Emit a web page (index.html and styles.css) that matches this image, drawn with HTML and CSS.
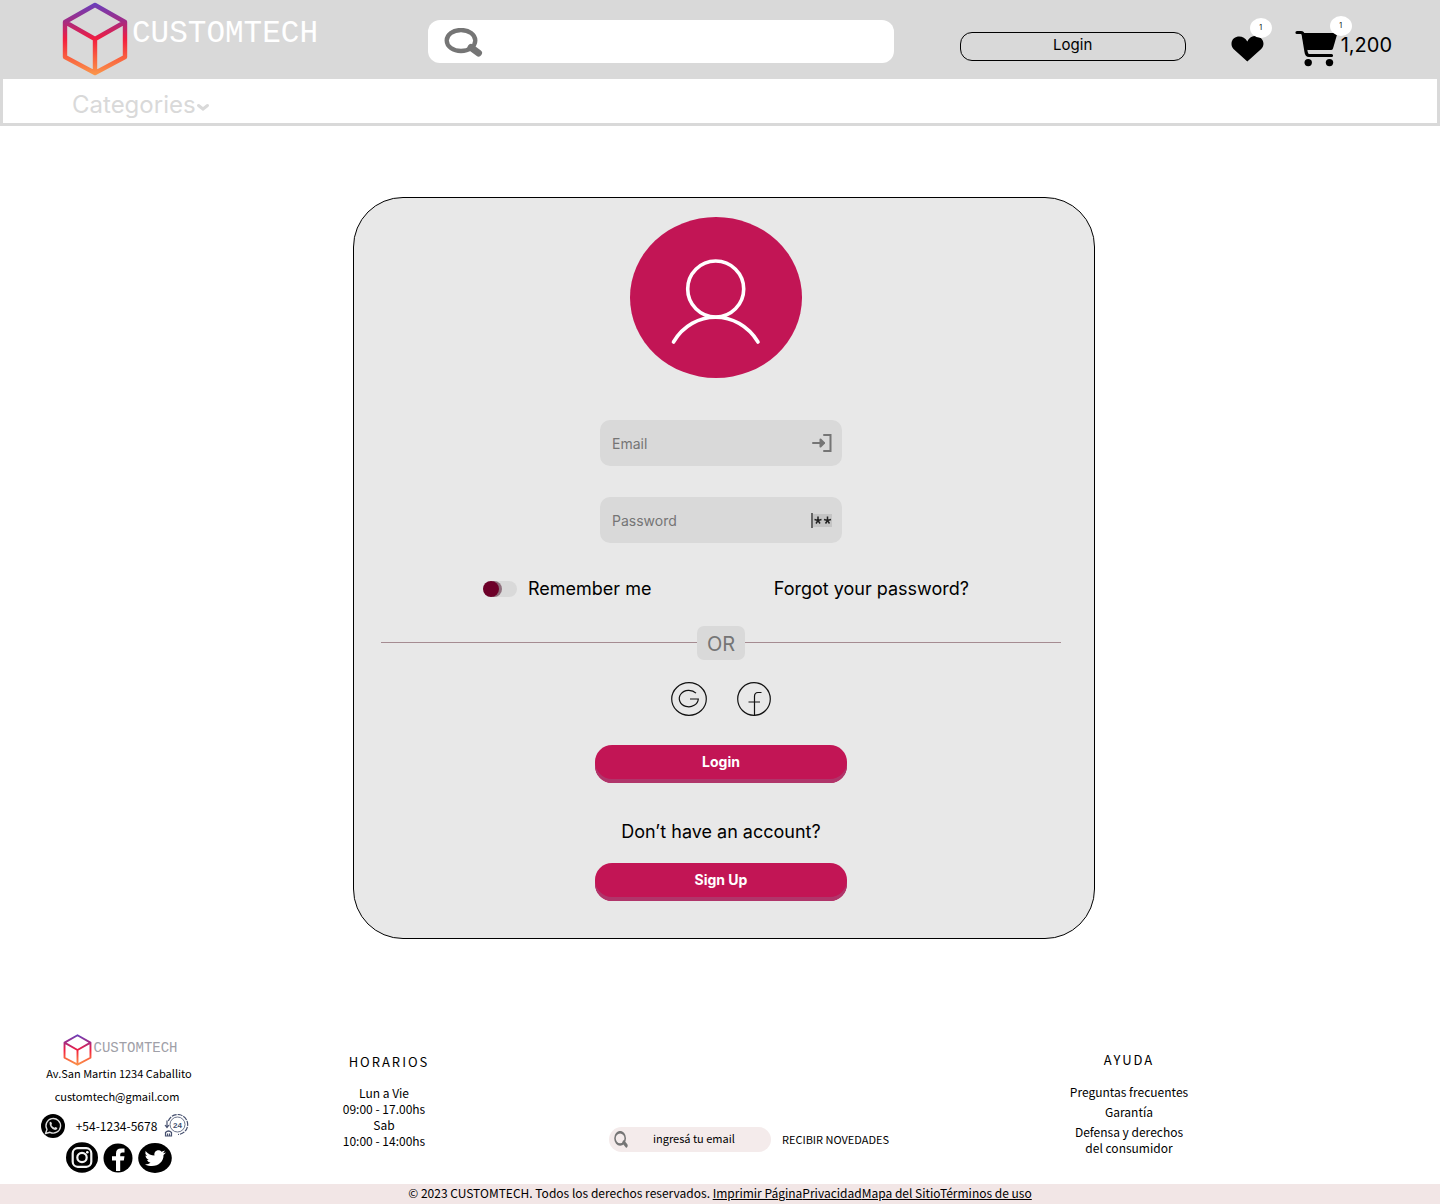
FILE: index.html
```html
<!DOCTYPE html>
<html lang="en">
<head>
<meta charset="utf-8">
<meta name="viewport" content="width=device-width, initial-scale=1">
<title>CUSTOMTECH - Login</title>
<link rel="stylesheet" href="styles.css">
</head>
<body>
<svg class="defs" width="0" height="0" aria-hidden="true">
  <defs>
    <linearGradient id="cube-fill" gradientUnits="userSpaceOnUse" x1="0" y1="0" x2="0" y2="74">
      <stop offset="0" stop-color="#6440c0"/>
      <stop offset="0.25" stop-color="#a12c86"/>
      <stop offset="0.5" stop-color="#f21d40"/>
      <stop offset="0.75" stop-color="#f9603f"/>
      <stop offset="1" stop-color="#fa9a4c"/>
    </linearGradient>
    <symbol id="cube" viewBox="0 0 66 74">
      <path d="M33 3 63 20V55L33 71 3 55V20ZM3 20 33 37 63 20M33 37V71" fill="none" stroke="url(#cube-fill)" stroke-width="4.4" stroke-linejoin="round"/>
    </symbol>
    <symbol id="magnifier" viewBox="0 0 39 29" preserveAspectRatio="none">
      <ellipse cx="17" cy="12.500" rx="14.300" ry="10.500" fill="none" stroke="#757575" stroke-width="4.300"/>
      <path d="M27 19.500 34.500 25" stroke="#757575" stroke-width="7" stroke-linecap="round"/>
    </symbol>
  </defs>
</svg>

<header class="topbar">
  <a class="brand" href="#">
    <svg class="brand-cube" aria-hidden="true"><use href="#cube"/></svg>
    <span class="brand-name">CUSTOMTECH</span>
  </a>
  <form class="search" role="search">
    <svg class="search-icon" aria-hidden="true"><use href="#magnifier"/></svg>
    <input class="search-input" type="search" aria-label="Search">
  </form>
  <div class="actions">
    <button class="account-button" type="button">Login</button>
    <a class="favorites" href="#" aria-label="Favorites">
      <svg width="33" height="26" viewBox="0 0 33 26" aria-hidden="true"><path d="M16.300 25.500 2.500 13C-.5 9.500 0 4.500 3 2.200 7-1 13.500 0 16.300 5.500 19-.5 26-1.500 30 2.200 33 5 33.500 9.500 30.200 13Z"/></svg>
      <span class="badge badge-favorites">1</span>
    </a>
    <a class="cart" href="#">
      <svg width="43" height="37" viewBox="0 0 43 37" aria-label="Cart">
        <path d="M6.500 3H42.500L38 18.500Q37.500 20 36 20H12.500L10 19Z"/>
        <path d="M2 2.500H6Q8 2.500 8.300 5L11 21.500Q11.500 25.500 14 25.500H36.500" fill="none" stroke="#000" stroke-width="3.200" stroke-linecap="round"/>
        <circle cx="13.200" cy="32.600" r="3.700"/><circle cx="34.500" cy="32.600" r="3.700"/>
      </svg>
      <span class="badge badge-cart">1</span>
      <span class="cart-total">1,200</span>
    </a>
  </div>
</header>

<nav class="categories">
  <button class="categories-button" type="button">Categories<svg width="14" height="9" viewBox="0 0 14 9" aria-hidden="true"><path d="M2.500 2.500 7 6 11.500 2.500" fill="none" stroke="#d9d9d9" stroke-width="3" stroke-linecap="round"/></svg></button>
</nav>

<main class="main">
  <form class="card">
    <svg class="avatar" viewBox="0 0 172 161" aria-hidden="true">
      <ellipse cx="86" cy="80.500" rx="86" ry="80.500" fill="#c21555"/>
      <g fill="none" stroke="#fff" stroke-width="3.600" stroke-linecap="round">
        <circle cx="85.700" cy="72" r="28"/>
        <path d="M43.500 125C63 92 108 92 128 125"/>
      </g>
    </svg>

    <label class="field">
      <input class="field-input" type="email" placeholder="Email" aria-label="Email">
      <svg width="20" height="20" viewBox="0 0 20 20" aria-hidden="true" fill="none" stroke="#757575" stroke-width="2" stroke-linecap="round"><path d="M12 2H18.500V18H12M1 10H12"/><path d="M8.500 6.500 12 10 8.500 13.500Z" stroke-linejoin="round"/></svg>
    </label>
    <label class="field">
      <input class="field-input" type="password" placeholder="Password" aria-label="Password">
      <svg width="22" height="16" viewBox="0 0 22 16" aria-hidden="true">
        <path d="M3 2H22V15H3Z" fill="#c4c4c4"/><path d="M2 1V16" stroke="#666" stroke-width="2"/>
        <path d="M8 4.500V8.500M4.500 7.500 8 8.500 11.500 7.500M6 11.500 8 8.500 10 11.500M17.500 4.500V8.500M14 7.500 17.500 8.500 21 7.500M15.500 11.500 17.500 8.500 19.500 11.500" fill="none" stroke="#222" stroke-width="1.500"/>
      </svg>
    </label>

    <div class="options">
      <label class="remember"><input class="toggle" type="checkbox">Remember me</label>
      <a class="forgot" href="#">Forgot your password?</a>
    </div>

    <div class="divider"><span class="divider-label">OR</span></div>

    <div class="providers">
      <button class="provider" type="button" aria-label="Continue with Google">
        <svg width="36" height="34" viewBox="0 0 36 34" fill="none" stroke="#111"><ellipse cx="18" cy="17" rx="17.300" ry="16.300" stroke-width="1.200"/><path d="M25 11.200A9.500 8.200 0 1 0 27.300 17H19" stroke-width="1.200"/></svg>
      </button>
      <button class="provider" type="button" aria-label="Continue with Facebook">
        <svg width="34" height="34" viewBox="0 0 34 34" fill="none" stroke="#111"><circle cx="17" cy="17" r="16.300" stroke-width="1.200"/><path d="M24.500 10.500H21Q17.500 10.500 17.500 14.500V34M11.500 20H23" stroke-width="1.200"/></svg>
      </button>
    </div>

    <button class="primary" type="submit">Login</button>
    <p class="prompt">Don’t have an account?</p>
    <button class="primary" type="button">Sign Up</button>
  </form>
</main>

<footer class="footer">
  <section class="contact">
    <a class="brand brand-small" href="#">
      <svg class="brand-cube" aria-hidden="true"><use href="#cube"/></svg>
      <span class="brand-name">CUSTOMTECH</span>
    </a>
    <address class="address">Av.San Martin 1234 Caballito</address>
    <a class="email" href="#">customtech@gmail.com</a>
    <div class="phone">
      <svg width="24" height="24" viewBox="0 0 24 24" aria-label="WhatsApp">
        <circle cx="12" cy="12" r="12"/>
        <path d="M4.500 19.500 6 15.500A7.300 7.300 0 1 1 9 18.300Z" fill="none" stroke="#ddd" stroke-width="1.400" stroke-linejoin="round"/>
        <path d="M8.500 8.500Q9.500 7 10.500 8.500L11 10 10.300 11Q11.500 13 13.500 13.700L14.500 13 16.500 14Q16 16 14 16 8.500 14.500 8.500 8.500Z" fill="#ddd"/>
      </svg>
      <span class="phone-number">+54-1234-5678</span>
      <svg width="25" height="24" viewBox="0 0 25 24" aria-hidden="true" fill="none" stroke="#46506f">
        <circle cx="13.500" cy="10.500" r="7.500" stroke-width=".8"/>
        <path d="M4.300 7A10 10 0 1 1 14 20.500" stroke-width="1.200" stroke-dasharray="5 1"/>
        <path d="M3 6.500V13M1 11 3 13.500 5 11" stroke-width="1.200"/>
        <path d="M1.500 22V18.500Q4.500 15.500 7.500 18.500V22ZM3.500 22V19.500M5.500 22V19.500" stroke-width="1.200"/>
        <text class="hours-mark" x="13.500" y="13.500" text-anchor="middle">24</text>
      </svg>
    </div>
    <div class="social">
      <a href="#" aria-label="Instagram"><svg width="32" height="31" viewBox="0 0 32 31"><ellipse cx="16" cy="15.500" rx="16" ry="15.200"/><g fill="none" stroke="#f4f4f4" stroke-width="2.200"><rect x="6.700" y="6.200" width="18.600" height="18.600" rx="5"/><circle cx="16" cy="15.500" r="4.700"/></g><circle cx="21.300" cy="10.300" r="1.300" fill="#fff"/></svg></a>
      <a href="#" aria-label="Facebook"><svg width="30" height="30" viewBox="0 0 30 30"><circle cx="15" cy="15" r="14.500"/><path d="M13 28V17.500H9V13.300H13V10.500Q13 5.500 18 5.500H21.500V9.500H19.300Q17.200 9.500 17.200 11.500V13.300H21.500L20.800 17.500H17.200V28Z" fill="#fff"/></svg></a>
      <a href="#" aria-label="Twitter"><svg width="34" height="30" viewBox="0 0 34 30"><ellipse cx="17" cy="15" rx="16.800" ry="15"/><path d="M7.500 8Q11.500 12.500 16.500 12.500C15.500 8 20.500 5.500 23.500 8.700L27 7.500 25 10.200 28 9.500 25.500 12C26 20 17 26 7 21.500Q10.500 21.500 12.500 19.800 9.800 19.300 9 17L10.800 16.800Q7.500 15.300 7.500 12.500L9.200 13Q6.500 10.500 7.500 8Z" fill="#fff"/></svg></a>
    </div>
  </section>

  <section class="hours">
    <h2 class="footer-title">HORARIOS</h2>
    <p class="hours-list">Lun a Vie<br>09:00 - 17.00hs<br>Sab<br>10:00 - 14:00hs</p>
  </section>

  <form class="newsletter">
    <label class="newsletter-field">
      <svg class="newsletter-icon" aria-hidden="true"><use href="#magnifier"/></svg>
      <input class="newsletter-input" type="email" placeholder="ingresá tu email" aria-label="ingresá tu email">
    </label>
    <button class="newsletter-button" type="submit">RECIBIR NOVEDADES</button>
  </form>

  <section class="help">
    <h2 class="footer-title">AYUDA</h2>
    <ul class="help-list">
      <li><a href="#">Preguntas frecuentes</a></li>
      <li><a href="#">Garantía</a></li>
      <li><a href="#">Defensa y derechos<br>del consumidor</a></li>
    </ul>
  </section>
</footer>

<div class="legal">© 2023 CUSTOMTECH. Todos los derechos reservados. <a href="#">Imprimir Página</a><a href="#">Privacidad</a><a href="#">Mapa del Sitio</a><a href="#">Términos de uso</a></div>
</body>
</html>
```
FILE: styles.css
```css
*,
*::before {
  box-sizing: border-box;
}

body {
  margin: 0;
  background: #fff;
  color: #000;
  font-family: Inter, "Liberation Sans", sans-serif;
}

button,
input {
  margin: 0;
  padding: 0;
  border: 0;
  background: none;
  color: inherit;
  font: inherit;
}

button {
  cursor: pointer;
}

a {
  color: inherit;
  text-decoration: none;
}

svg {
  display: block;
  flex: none;
}

.defs {
  position: absolute;
}

/* Header */
.topbar {
  display: flex;
  align-items: flex-start;
  height: 76px;
  padding: 0 48px 0 62px;
  background: #d9d9d9;
}

.brand {
  display: flex;
  gap: 4px;
  padding-top: 2px;
}

.brand-cube {
  width: 66px;
  height: 74px;
}

.brand-name {
  padding-top: 14px;
  color: #fff;
  font: 31px/36px "Liberation Mono", monospace;
}

.search {
  display: flex;
  flex: 1;
  align-items: center;
  height: 43px;
  margin: 20px 66px 0 110px;
  padding: 1px 16px 0;
  border-radius: 12px;
  background: #fff;
}

.search-icon {
  width: 39px;
  height: 29px;
}

.search-input {
  flex: 1;
  min-width: 0;
  height: 100%;
  padding-left: 12px;
  font-size: 16px;
  outline: 0;
}

.actions {
  display: flex;
  align-items: flex-start;
  padding-top: 30px;
}

.account-button {
  width: 226px;
  height: 29px;
  margin-top: 2px;
  padding-bottom: 4px;
  border: 1px solid #000;
  border-radius: 12px;
  font-size: 15px;
}

.favorites {
  position: relative;
  margin: 6px 31px 0 45px;
}

.cart {
  position: relative;
  display: flex;
  align-items: center;
  gap: 3px;
}

.cart-total {
  padding-bottom: 7px;
  font-size: 20px;
  line-height: 24px;
}

.badge {
  position: absolute;
  width: 22px;
  height: 20px;
  border-radius: 50%;
  background: #fff;
  font-size: 7px;
  line-height: 20px;
  text-align: center;
}

.badge-favorites {
  top: -18px;
  left: 19px;
}

.badge-cart {
  top: -14px;
  left: 35px;
}

.categories {
  height: 50px;
  padding: 10px 69px 0;
  border: 3px solid #d9d9d9;
}

.categories-button {
  display: flex;
  align-items: center;
  color: #d9d9d9;
  font-size: 24px;
  line-height: 32px;
}

.categories-button svg {
  margin-top: 4px;
}

/* Sign-in card */
.main {
  padding: 71px 0 95px 8px;
}

.card {
  display: flex;
  flex-direction: column;
  align-items: center;
  max-width: 742px;
  margin: 0 auto;
  padding: 19px 33px 37px 27px;
  border: 1px solid #000;
  border-radius: 50px;
  background: #e8e8e8;
}

.avatar {
  width: 172px;
  height: 161px;
  margin: 0 10px 42px 0;
}

.field {
  display: flex;
  align-items: center;
  width: 242px;
  height: 46px;
  margin-bottom: 31px;
  padding: 0 10px 0 12px;
  border-radius: 10px;
  background: #d9d9d9;
}

.field-input {
  flex: 1;
  min-width: 0;
  height: 100%;
  font-size: 14px;
  outline: 0;
}

.field-input::placeholder {
  color: #757575;
  opacity: 1;
}

.options {
  display: flex;
  justify-content: space-between;
  align-self: stretch;
  margin-top: 3px;
  padding: 0 92px 0 102px;
  font-size: 18px;
  line-height: 24px;
}

.remember {
  display: flex;
  align-items: center;
  gap: 11px;
}

.toggle {
  width: 34px;
  height: 16px;
  border-radius: 8px;
  background: #d9d9d9;
  appearance: none;
}

.toggle::before {
  display: block;
  width: 16px;
  height: 16px;
  border-radius: 50%;
  background: #6d0029;
  box-shadow: 3px 0 0 #8f707d;
  content: "";
}

.toggle:checked::before {
  margin-left: 18px;
  box-shadow: -3px 0 0 #8f707d;
}

.divider {
  display: flex;
  align-items: center;
  align-self: stretch;
  margin-top: 25px;
}

.divider::before,
.divider::after {
  flex: 1;
  height: 1px;
  margin-bottom: 1px;
  background: #a58b91;
  content: "";
}

.divider-label {
  width: 48px;
  padding-top: 2px;
  border-radius: 7px;
  background: #d9d9d9;
  color: #757575;
  font-size: 20px;
  line-height: 32px;
  text-align: center;
}

.providers {
  display: flex;
  gap: 30px;
  margin: 22px 0 29px;
}

.primary {
  width: 252px;
  height: 38px;
  padding-bottom: 6px;
  border-radius: 17px;
  background: #c21555;
  box-shadow: inset 0 -4px 0 #b0356a;
  color: #fff;
  font-size: 14px;
  font-weight: 700;
}

.prompt {
  margin: 37px 0 19px;
  font-size: 18px;
  line-height: 24px;
}

/* Footer */
.footer {
  display: grid;
  grid-template-columns: 238fr 292fr 438fr 322fr;
  padding: 0 150px 11px 0;
  font-family: "Noto Sans CJK SC", "Noto Sans", sans-serif;
  font-size: 12px;
  line-height: 16px;
  text-align: center;
}

.contact {
  display: flex;
  flex-direction: column;
  align-items: center;
}

.brand-small {
  gap: 1px;
  padding: 0 0 0 3px;
}

.brand-small .brand-cube {
  width: 29px;
  height: 32px;
}

.brand-small .brand-name {
  padding-top: 6px;
  color: #a0a0a8;
  font-size: 14px;
  line-height: 16px;
}

.address {
  margin-bottom: 8px;
  font-size: 11px;
  font-style: normal;
  line-height: 14px;
}

.email {
  padding-right: 4px;
  font-size: 11px;
}

.phone {
  display: flex;
  align-items: center;
  gap: 7px;
  margin-top: 10px;
  padding-right: 8px;
}

.phone-number {
  padding-left: 4px;
}

.hours-mark {
  fill: #46506f;
  stroke: none;
  font: 700 8px "Liberation Sans", sans-serif;
}

.social {
  display: flex;
  align-items: center;
  gap: 5px;
  margin-top: 4px;
}

.footer-title {
  margin: 0;
  font-size: 13px;
  font-weight: 400;
  line-height: 20px;
  letter-spacing: 2px;
}

.hours {
  padding-top: 18px;
}

.hours .footer-title {
  padding-left: 10px;
}

.hours-list {
  margin: 13px 0 0;
}

.help {
  padding-top: 16px;
}

.help-list {
  display: flex;
  flex-direction: column;
  gap: 4px;
  margin: 14px 0 0;
  padding: 0;
  list-style: none;
}

.newsletter {
  display: flex;
  align-items: center;
  align-self: start;
  justify-content: center;
  gap: 11px;
  padding-top: 93px;
}

.newsletter-field {
  display: flex;
  align-items: center;
  width: 162px;
  height: 25px;
  padding: 0 11px 0 5px;
  border-radius: 13px;
  background: #f4ebeb;
}

.newsletter-icon {
  width: 14px;
  height: 17px;
}

.newsletter-input {
  flex: 1;
  min-width: 0;
  height: 22px;
  padding-bottom: 4px;
  font-size: 11px;
  text-align: center;
  outline: 0;
}

.newsletter-input::placeholder {
  color: #000;
  opacity: 1;
}

.newsletter-button {
  padding-bottom: 2px;
  font-size: 11px;
}

.legal {
  padding-bottom: 2px;
  background: #f2e6e6;
  font: 12px/18px "Noto Sans CJK SC", "Noto Sans", sans-serif;
  text-align: center;
}

.legal a {
  text-decoration: underline;
}
```
